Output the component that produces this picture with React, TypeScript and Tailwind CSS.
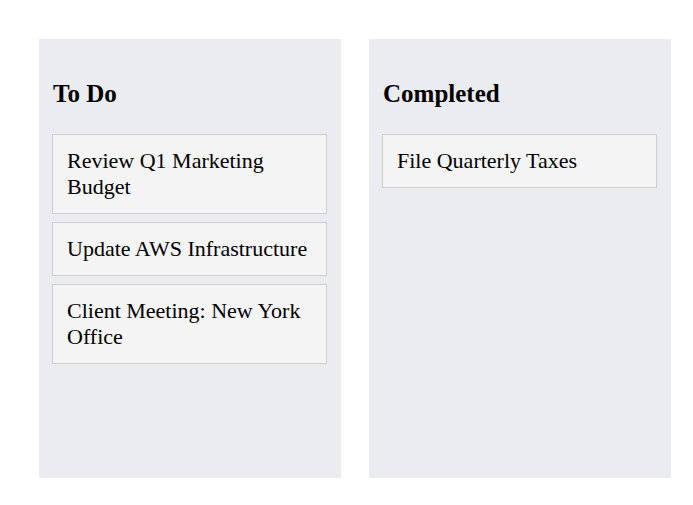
const columns = [
  {
    title: 'To Do',
    cards: ['Review Q1 Marketing Budget', 'Update AWS Infrastructure', 'Client Meeting: New York Office'],
  },
  {
    title: 'Completed',
    cards: ['File Quarterly Taxes'],
  },
];

export default function App() {
  return (
    <div className="flex gap-[28px] pl-[39px] pt-[39px] font-['Liberation_Serif',serif] text-black">
      {columns.map((col) => (
        <div key={col.title} className="h-[439px] w-[302px] bg-[#ebecef] pl-[13px] pr-[14px]">
          <h2 className="mt-[41px] mb-[26px] pl-px text-[25px] font-bold leading-[28px]">{col.title}</h2>
          <div className="flex flex-col gap-2">
            {col.cards.map((card) => (
              <div
                key={card}
                className="border border-[#cfcfd2] bg-[#f4f4f4] pt-[13px] pb-[13px] pl-[14px] pr-[12px] text-[22px] leading-[26px]"
              >
                {card}
              </div>
            ))}
          </div>
        </div>
      ))}
    </div>
  );
}
